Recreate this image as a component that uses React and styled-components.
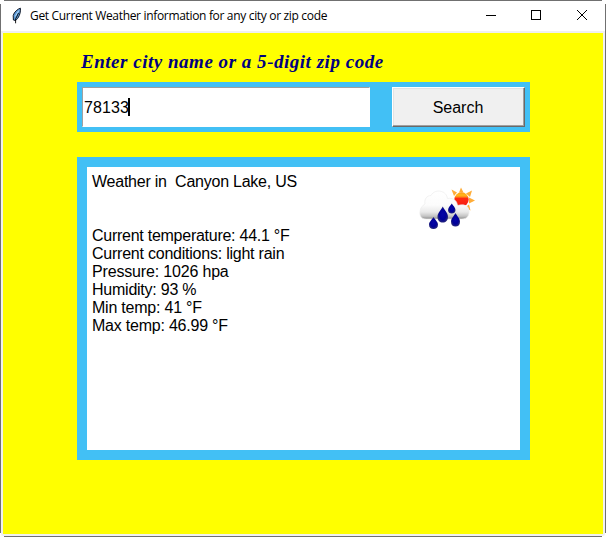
import React from "react";
import styled, { createGlobalStyle } from "styled-components";

const GlobalStyle = createGlobalStyle`
  html, body { margin: 0; padding: 0; background: #fff; overflow: hidden; }
  * { box-sizing: border-box; }
`;

const Window = styled.div`
  width: 606px;
  height: 537px;
  display: grid;
  grid-template-columns: 1px 1fr 1px;
  grid-template-rows: 1px 1fr 1px;
  background: #fff;
`;

const HorizontalEdge = styled.div`
  grid-column: 1 / -1;
  margin: 0 4px;
  background: #707070;
`;

const VerticalEdge = styled.div`
  margin: 3px 0;
  background: #707070;
`;

const Frame = styled.div`
  display: flex;
  flex-direction: column;
  min-width: 0;
`;

const TitleBar = styled.header`
  height: 30px;
  display: flex;
  align-items: center;
  background: #fff;
  padding-left: 9px;
`;

const FeatherIcon = styled.svg`
  width: 16px;
  height: 18px;
  flex: none;
`;

const Title = styled.h1`
  flex: 1;
  margin: 0 0 0 4px;
  font: 400 12px/18px "Open Sans", "Noto Sans", sans-serif;
  letter-spacing: -0.325px;
  color: #000;
  white-space: pre;
`;

const Controls = styled.div`
  display: flex;
  height: 30px;
`;

const ControlButton = styled.button`
  width: ${(p) => p.$width || "46px"};
  height: 30px;
  padding: 0;
  border: 0;
  background: transparent;
  display: flex;
  justify-content: center;
  svg { display: block; margin-top: 9px; }
`;

const Client = styled.main`
  height: 505px;
  border: 2px solid #f0f0f0;
  border-radius: 0 0 2px 2px;
  background: #ffff00;
  padding: 17px 73px 0 74px;
`;

const Heading = styled.h2`
  margin: 0;
  height: 32px;
  padding-left: 4px;
  font: italic 700 19px/24px "Liberation Serif", "Times New Roman", serif;
  letter-spacing: 0.52px;
  color: #000080;
  white-space: nowrap;
`;

const SearchPanel = styled.form`
  height: 50px;
  padding: 5px;
  display: flex;
  justify-content: space-between;
  background: #42c0f5;
`;

const Entry = styled.div`
  width: 288px;
  height: 40px;
  display: flex;
  align-items: center;
  background: #fff;
  border: 1px solid;
  border-color: #a0a0a0 #fff #fff #a0a0a0;
  padding: 2px 0 0 1px;
  font: 400 16px/18px "Liberation Sans", Arial, sans-serif;
  letter-spacing: 0.1px;
  color: #000;
`;

const Caret = styled.span`
  width: 2px;
  height: 18px;
  margin: -2px 0 0 -1px;
  background: #000;
`;

const SearchButton = styled.button`
  width: 133px;
  height: 40px;
  padding: 2px 1px 0 0;
  border: 1px solid;
  border-color: #fff #696969 #696969 #fff;
  box-shadow: inset -1px -1px #a0a0a0, inset 1px 1px #e3e3e3;
  background: #f0f0f0;
  font: 400 16px/18px "Liberation Sans", Arial, sans-serif;
  color: #000;
`;

const ResultPanel = styled.section`
  margin-top: 25px;
  height: 303px;
  padding: 10px;
  background: #42c0f5;
`;

const ResultBody = styled.div`
  height: 283px;
  background: #fff;
  padding: 6px 40px 0 5px;
  display: flex;
  justify-content: space-between;
`;

const Report = styled.div`
  font: 400 16px/18px "Liberation Sans", Arial, sans-serif;
  color: #000;
`;

const Line = styled.p`
  margin: 0 0 ${(p) => (p.$lead ? "36px" : "0")};
  height: 18px;
  white-space: pre;
  letter-spacing: ${(p) => p.$tracking};
`;

const WeatherIcon = styled.svg`
  width: 64px;
  height: 50px;
  margin-top: 9px;
  flex: none;
`;

const lines = [
  { text: "Weather in  Canyon Lake, US", tracking: "-0.24px", lead: true },
  { text: "Current temperature: 44.1 °F", tracking: "-0.26px" },
  { text: "Current conditions: light rain", tracking: "-0.23px" },
  { text: "Pressure: 1026 hpa", tracking: "-0.17px" },
  { text: "Humidity: 93 %", tracking: "-0.24px" },
  { text: "Min temp: 41 °F", tracking: "-0.22px" },
  { text: "Max temp: 46.99 °F", tracking: "-0.22px" },
];

function Drop({ x, y, w, h }) {
  return (
    <path
      transform={`translate(${x} ${y}) scale(${w / 10} ${h / 14})`}
      d="M5 0C6.500 3 10 5.500 10 9C10 12.500 7.800 14 5 14C2.200 14 0 12.500 0 9C0 5.500 3.500 3 5 0Z"
      fill="url(#drop)"
    />
  );
}

function SunRainCloud() {
  return (
    <WeatherIcon viewBox="416 182 64 50" aria-label="light rain">
      <defs>
        <linearGradient id="cloud" x1="0" y1="0" x2="0" y2="1">
          <stop offset="0" stopColor="#ffffff" />
          <stop offset="0.5" stopColor="#fcfcfc" />
          <stop offset="0.75" stopColor="#e9e9e9" />
          <stop offset="0.9" stopColor="#c4c4c4" />
          <stop offset="1" stopColor="#8c8c8c" />
        </linearGradient>
        <linearGradient id="sun" x1="0" y1="0" x2="0" y2="1">
          <stop offset="0" stopColor="#ff9a18" />
          <stop offset="0.2" stopColor="#ffb818" />
          <stop offset="0.32" stopColor="#ff8a18" />
          <stop offset="0.42" stopColor="#ff2b12" />
          <stop offset="1" stopColor="#f51a10" />
        </linearGradient>
        <radialGradient id="drop">
          <stop offset="0" stopColor="#0606a8" />
          <stop offset="0.65" stopColor="#000098" />
          <stop offset="1" stopColor="#24247c" />
        </radialGradient>
      </defs>
      <g fill="#ffad38">
        <path d="M459 192.500L461 187.500L463.500 192.500Z" />
        <path d="M451.500 189.500L457 192.500L454 196Z" />
        <path d="M466 193.500L472 190.500L470 197Z" />
        <path d="M469 197.500L475 200.500L469 203.500Z" />
        <path d="M469 204.500L470.500 210.500L465 207.500Z" />
      </g>
      <circle cx="461.500" cy="199.500" r="7.200" fill="url(#sun)" />
      <path
        d="M426 219C421 219 419.500 215.500 420 211.500C420.200 208 422.500 205.500 425 204C424 199 427 195.500 431 195.500C433 191.500 438 190.200 441.500 191.500C445 192.500 447 195 447.500 198.500C453 197.500 457 200.500 457.500 205.500C463 204 468.500 205 469 210.500C469.500 215.500 467 219 462 219Z"
        fill="url(#cloud)"
        stroke="#ececec"
        strokeWidth="0.7"
      />
      <Drop x={448} y={203.500} w={7.500} h={10} />
      <Drop x={437.500} y={206.500} w={10.500} h={16} />
      <Drop x={451} y={213} w={9} h={13.500} />
      <Drop x={429} y={217} w={9} h={12} />
    </WeatherIcon>
  );
}

export default function App() {
  return (
    <>
      <GlobalStyle />
      <Window>
        <HorizontalEdge />
        <VerticalEdge />
        <Frame>
          <TitleBar>
            <FeatherIcon viewBox="10 6 16 18">
              <path
                d="M20.400 7.200C18 7.800 14 11 13.200 14.500L13.400 19L15.500 19.500C18.500 17.500 20.800 12.500 20.400 7.200Z"
                fill="#5c9ad8"
                stroke="#111827"
                strokeWidth="1"
              />
              <path d="M18.800 9.500L15.200 15.500" stroke="#b9dcf8" strokeWidth="1" />
              <path d="M18.500 12L15.600 18V22.300" fill="none" stroke="#000" strokeWidth="0.900" />
            </FeatherIcon>
            <Title>Get Current Weather information for any city or zip code</Title>
            <Controls>
              <ControlButton $width="44px" aria-label="Minimize">
                <svg width="10" height="11" shapeRendering="crispEdges">
                  <path d="M0 5.500H10" stroke="#000" />
                </svg>
              </ControlButton>
              <ControlButton aria-label="Maximize">
                <svg width="10" height="10" shapeRendering="crispEdges">
                  <rect x="0.500" y="0.500" width="9" height="9" fill="none" stroke="#000" />
                </svg>
              </ControlButton>
              <ControlButton aria-label="Close">
                <svg width="10" height="10">
                  <path d="M0 0L10 10M10 0L0 10" stroke="#000" />
                </svg>
              </ControlButton>
            </Controls>
          </TitleBar>
          <Client>
            <Heading>Enter city name or a 5-digit zip code</Heading>
            <SearchPanel onSubmit={(e) => e.preventDefault()}>
              <Entry>
                78133
                <Caret />
              </Entry>
              <SearchButton type="submit">Search</SearchButton>
            </SearchPanel>
            <ResultPanel>
              <ResultBody>
                <Report>
                  {lines.map((l) => (
                    <Line key={l.text} $lead={l.lead} $tracking={l.tracking}>
                      {l.text}
                    </Line>
                  ))}
                </Report>
                <SunRainCloud />
              </ResultBody>
            </ResultPanel>
          </Client>
        </Frame>
        <VerticalEdge />
        <HorizontalEdge />
      </Window>
    </>
  );
}
